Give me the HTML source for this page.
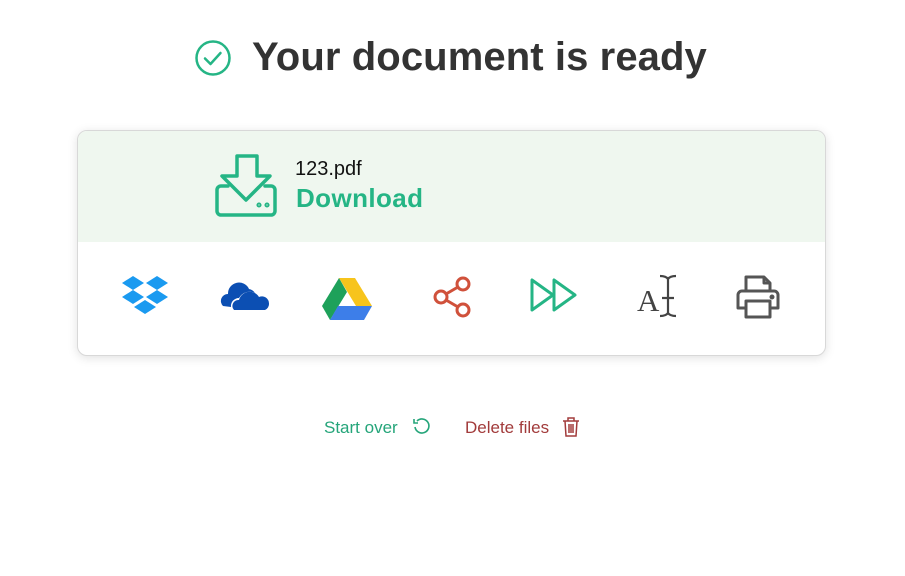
<!DOCTYPE html>
<html><head><meta charset="utf-8"><style>
*{margin:0;padding:0;box-sizing:border-box}
body{width:905px;height:576px;background:#fff;font-family:"Liberation Sans",sans-serif;position:relative;overflow:hidden}
.title{position:absolute;left:252px;top:35px;font-size:40px;font-weight:bold;color:#333;letter-spacing:0.1px;white-space:nowrap}
.card{position:absolute;left:77px;top:130px;width:749px;height:226px;border:1px solid #d8d8d8;border-radius:10px;box-shadow:0 2px 10px rgba(0,0,0,.12);overflow:hidden;background:#fff}
.top{height:111px;background:#eff7ef}
.abs{position:absolute}
</style></head><body>
<svg class="abs" style="left:194px;top:39px" width="38" height="38" viewBox="0 0 38 38"><circle cx="19" cy="19" r="16.5" fill="none" stroke="#25b585" stroke-width="2.5"/><path d="M11 19.5l5.5 5.5 10-11" fill="none" stroke="#25b585" stroke-width="2.5" stroke-linecap="round" stroke-linejoin="round"/></svg>
<div class="title">Your document is ready</div>
<div class="card"><div class="top"></div></div>
<svg class="abs" style="left:210px;top:150px" width="72" height="72" viewBox="210 150 72 72" fill="none" stroke="#25b585" stroke-width="3.5" stroke-linejoin="round" stroke-linecap="round"><path d="M237 156h20v20h13l-24 24-24-24h15z"/><path d="M228 186h-7a4 4 0 0 0-4 4v21a4 4 0 0 0 4 4h50a4 4 0 0 0 4-4v-21a4 4 0 0 0-4-4h-6"/><circle cx="259" cy="205" r="0.8" fill="#25b585"/><circle cx="267" cy="205" r="0.8" fill="#25b585"/></svg>
<div class="abs" style="left:295px;top:158px;font-size:20px;color:#111">123.pdf</div>
<div class="abs" style="left:296px;top:183px;font-size:26px;font-weight:bold;color:#25b585;letter-spacing:0.4px">Download</div>
<svg class="abs" style="left:122px;top:276px" width="46" height="38" viewBox="0 0 46 38" fill="#1a9af0"><path d="M0 7l11-7 11 7-11 7z"/><path d="M24 7l11-7 11 7-11 7z"/><path d="M0 21l11-7 11 7-11 7z"/><path d="M24 21l11-7 11 7-11 7z"/><path d="M12 31l11-7 11 7-11 7z"/></svg>
<svg class="abs" style="left:220px;top:281px" width="50" height="30" viewBox="0 0 50 30" fill="#0c4fb3"><path d="M3 25a7 7 0 0 1 5-12 11 11 0 0 1 21-5 9 9 0 0 1 6 4 12 12 0 0 0-16 5 8 8 0 0 0-8 9z" /><path d="M14 29a6 6 0 0 1 5-10 11 11 0 0 1 20-3 7 7 0 0 1 10 6.5 6.5 6.5 0 0 1-4 6.5z"/></svg>
<svg class="abs" style="left:322px;top:278px" width="50" height="42" viewBox="0 0 50 42"><path d="M17 0h16l17 28H34z" fill="#f7c41c"/><path d="M17 0L0 28l8 14 17-28z" fill="#1ea15a"/><path d="M8 42h34l8-14H16z" fill="#3d7ee9"/></svg>
<svg class="abs" style="left:432px;top:275px" width="42" height="44" viewBox="0 0 42 44" fill="none" stroke="#d0513b" stroke-width="3"><circle cx="31" cy="9" r="6"/><circle cx="9" cy="22" r="6"/><circle cx="31" cy="35" r="6"/><path d="M14 19l12-7M14 25l12 7"/></svg>
<svg class="abs" style="left:530px;top:278px" width="48" height="34" viewBox="0 0 48 34" fill="none" stroke="#25b585" stroke-width="3" stroke-linejoin="round"><path d="M2 2v30l21-15z"/><path d="M24 2v30l21-15z"/></svg>
<svg class="abs" style="left:636px;top:272px" width="44" height="48" viewBox="0 0 44 48"><text x="1" y="39" font-family="Liberation Serif,serif" font-size="31" fill="#444">A</text><path d="M24 4q6 0 8 3q2-3 8-3M32 7v34M24 44q6 0 8-3q2 3 8 3M26 26h12" fill="none" stroke="#444" stroke-width="2.2"/></svg>
<svg class="abs" style="left:735px;top:274px" width="46" height="46" viewBox="0 0 46 46" fill="none" stroke="#555" stroke-width="3" stroke-linejoin="round"><path d="M11 17V3h18l6 6v8"/><path d="M29 3v6h6"/><path d="M11 34H3V21a4 4 0 0 1 4-4h32a4 4 0 0 1 4 4v13h-8"/><path d="M11 27h24v16H11z"/><circle cx="37" cy="23" r="1" fill="#555"/></svg>
<div class="abs" style="left:324px;top:418px;font-size:17px;color:#25a57a">Start over</div>
<svg class="abs" style="left:412px;top:417px" width="20" height="20" viewBox="0 0 20 20" fill="none" stroke="#25a57a" stroke-width="1.6"><path d="M5 4a7 7 0 1 1-2 6"/><path d="M2 2v4h4" /></svg>
<div class="abs" style="left:465px;top:418px;font-size:17px;color:#a23b3b">Delete files</div>
<svg class="abs" style="left:562px;top:417px" width="18" height="20" viewBox="0 0 18 20" fill="none" stroke="#a23b3b" stroke-width="1.5"><path d="M1 4h16M6 4V1h6v3M3 4l1 15h10l1-15M7 7v9M9 7v9M11 7v9"/></svg>
</body></html>
